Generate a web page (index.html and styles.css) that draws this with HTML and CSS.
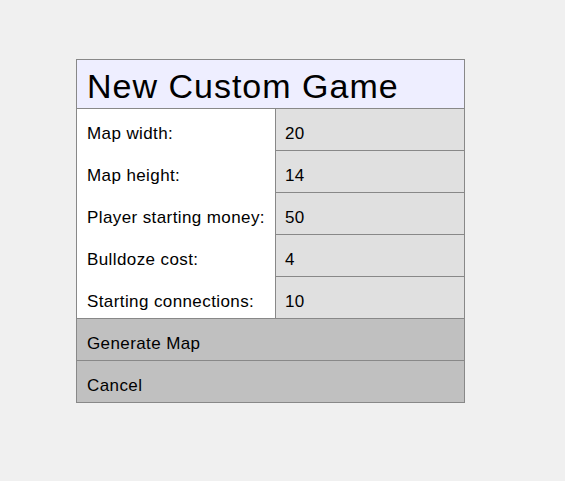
FILE: index.html
```html
<!DOCTYPE html>
<html>
<head>
<meta charset="utf-8">
<link rel="stylesheet" href="styles.css">
</head>
<body>
<div class="dialog">
  <div class="title">New Custom Game</div>
  <div class="form">
    <div class="label">Map width:</div><div class="value">20</div>
    <div class="label">Map height:</div><div class="value">14</div>
    <div class="label">Player starting money:</div><div class="value">50</div>
    <div class="label">Bulldoze cost:</div><div class="value">4</div>
    <div class="label">Starting connections:</div><div class="value">10</div>
  </div>
  <div class="button">Generate Map</div>
  <div class="button">Cancel</div>
</div>
</body>
</html>
```
FILE: styles.css
```css
html, body {
  margin: 0;
  background: #f0f0f0;
}
body {
  padding: 59px 0 0 76px;
  font-family: "Liberation Sans", Arial, sans-serif;
  color: #000;
}
.dialog {
  width: 387px;
  border: 1px solid #888;
  background: #fff;
}
.title {
  height: 46px;
  padding: 2px 0 0 10px;
  background: #eeeeff;
  border-bottom: 1px solid #888;
  font-size: 34px;
  letter-spacing: 1px;
  line-height: 48px;
}
.form {
  display: grid;
  grid-template-columns: 198px 1fr;
}
.label,
.value,
.button {
  height: 26px;
  padding: 15px 0 0 10px;
  font-size: 17px;
  letter-spacing: 0.4px;
  line-height: 20px;
}
.label {
  border-top: 1px solid transparent;
}
.value {
  padding-left: 9px;
  background: #e0e0e0;
  border-left: 1px solid #888;
  border-top: 1px solid #888;
}
.label:first-child,
.value:nth-child(2) {
  border-top: none;
}
.button {
  background: #c0c0c0;
  border-top: 1px solid #888;
}
```
